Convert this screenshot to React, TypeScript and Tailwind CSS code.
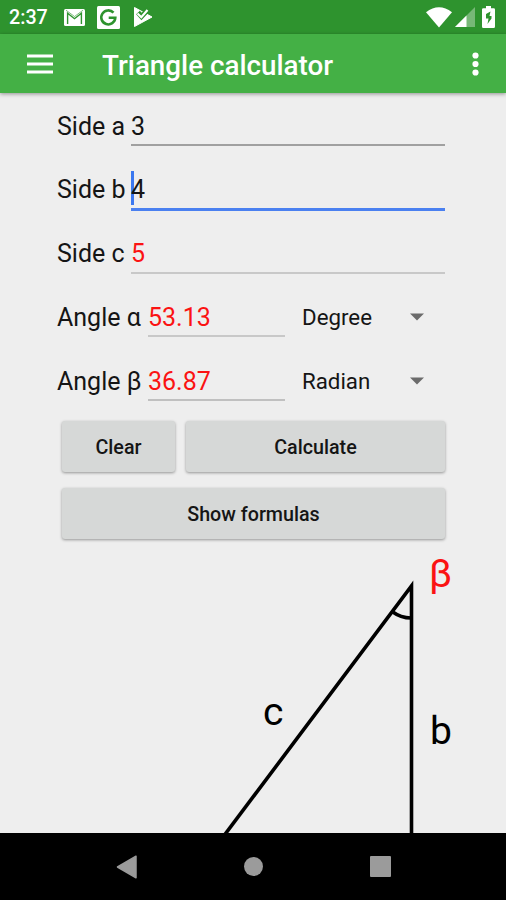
import React from "react";

type SideRowProps = { label: string; value: string; color: string; line: string; focused?: boolean };

function SideRow({ label, value, color, line, focused }: SideRowProps) {
  return (
    <div className="flex h-[63.75px] items-start pl-[57px] pr-[61px]">
      <label className="w-[74px] whitespace-pre pt-[17.5px] text-[25px] leading-8">{label}</label>
      <div className={`relative flex-1 pt-[17.5px] text-[25px] leading-8 ${line} ${color}`}>
        {focused && <span className="absolute left-0 top-[14px] h-[34px] w-[3px] bg-[#3b78f0]" />}
        <span className="relative">{value}</span>
      </div>
    </div>
  );
}

function AngleRow({ label, value, unit, line }: { label: string; value: string; unit: string; line: string }) {
  return (
    <div className="flex h-[63.75px] items-start pl-[57px] pr-[61px]">
      <label className="w-[91px] whitespace-pre pt-[18px] text-[25px] leading-8">{label}</label>
      <div className={`h-[53px] w-[137px] pt-[18px] text-[25px] leading-8 text-[#fb1313] ${line}`}>{value}</div>
      <div className="ml-[17px] flex flex-1 items-center pt-[17px] text-[22.3px] leading-8">
        <span className="w-[108px]">{unit}</span>
        <svg width="14" height="8" viewBox="0 0 14 8">
          <path d="M0 .5h14L7 7.5z" fill="#6b6b6b" />
        </svg>
      </div>
    </div>
  );
}

function Button({ children, className }: { children: React.ReactNode; className: string }) {
  return (
    <button
      className={`h-[51px] rounded-[3px] bg-[#d6d8d7] pt-[3px] text-[19.7px] font-medium shadow-[0_1px_3px_rgba(0,0,0,0.38)] ${className}`}
    >
      {children}
    </button>
  );
}

export default function App() {
  return (
    <div className="flex h-[900px] w-[506px] flex-col overflow-hidden bg-[#eeeeee] font-[Roboto,sans-serif] text-[#151515]">
      <div className="flex h-[34px] shrink-0 items-center bg-[#2e932e] pl-[9px] pr-[11px] text-white">
        <span className="w-[55px] pt-[2px] text-[19.7px] font-medium leading-6">2:37</span>
        <svg width="21" height="17" viewBox="0 0 21 17">
          <rect width="21" height="17" rx="1.5" fill="white" />
          <path d="M3.6 15V4.2l6.9 5.5 6.9-5.5V15" fill="none" stroke="#2e932e" strokeWidth="1.4" />
          <path d="M2 1.2l8.5 6.3L19 1.2" fill="none" stroke="#2e932e" strokeWidth="0.6" />
        </svg>
        <svg className="ml-3" width="23" height="23" viewBox="0 0 23 23">
          <rect width="23" height="23" rx="1.5" fill="white" />
          <path d="M16.5 6.7A7 7 0 1 0 18.3 11.8H11.7" fill="none" stroke="#2e932e" strokeWidth="2.6" />
        </svg>
        <svg className="ml-[13px]" width="20" height="20" viewBox="0 0 20 20">
          <path d="M1.5 .5L19 10 1.5 19.5z" fill="white" stroke="white" strokeLinejoin="round" />
          <path d="M5 5.500L8.500 9.500L16 1.500" fill="none" stroke="#2e932e" strokeWidth="5" />
          <path d="M4.500 6.500L8.300 10.200L14.500 3" fill="none" stroke="white" strokeWidth="2.200" />
        </svg>
        <svg className="ml-auto" width="26" height="21" viewBox="0 0 26 21">
          <path d="M0 5.2Q13-4.5 26 5.2L13 20.5z" fill="white" />
        </svg>
        <svg className="ml-[3px]" width="20" height="20" viewBox="0 0 20 20">
          <path d="M20 0v20H0z" fill="white" opacity=".35" />
          <path d="M11.5 8.5V20H0z" fill="white" />
        </svg>
        <svg className="ml-[7px]" width="13" height="22" viewBox="0 0 13 22">
          <path d="M4 0h5v2.200h2.700Q13 2.200 13 3.500v17q0 1.500-1.300 1.500H1.300Q0 22 0 20.500v-17Q0 2.200 1.300 2.200H4z" fill="white" />
          <path d="M8.500 5.500L4 8v4.500h2.500L5.500 18L9.500 12.500V10H7.500z" fill="#2e932e" />
        </svg>
      </div>

      <header className="z-10 flex h-[59px] shrink-0 items-center bg-[#44b045] pl-[27px] pr-[27px] text-white shadow-[0_1px_4px_rgba(0,0,0,0.4)]">
        <svg width="26" height="20" viewBox="0 0 26 20">
          <path d="M0 2h26M0 10h26M0 18h26" stroke="white" strokeWidth="3" />
        </svg>
        <h1 className="ml-[49px] pt-1 text-[27.8px] font-medium leading-8">Triangle calculator</h1>
        <svg className="ml-auto" width="7" height="24" viewBox="0 0 7 24">
          <circle cx="3.5" cy="3.5" r="3.1" fill="white" />
          <circle cx="3.5" cy="12" r="3.1" fill="white" />
          <circle cx="3.5" cy="20.5" r="3.1" fill="white" />
        </svg>
      </header>

      <main className="flex min-h-0 flex-1 flex-col">
        <SideRow label="Side a " value="3" color="" line="h-[53px] border-b-2 border-[#a0a0a0]" />
        <SideRow label="Side b " value="4" color="" line="h-[54px] border-b-3 border-[#4a80f0]" focused />
        <SideRow label="Side c " value="5" color="text-[#fb1313]" line="h-[53px] border-b-2 border-[#c8c8c8]" />
        <AngleRow label="Angle α " value="53.13" unit="Degree" line="border-b-2 border-[#c8c8c8]" />
        <AngleRow label="Angle β " value="36.87" unit="Radian" line="border-b-2 border-[#c0c0c0]" />
        <div className="mt-[9px] flex flex-wrap gap-x-[11px] gap-y-4 pl-[62px] pr-[61px]">
          <Button className="w-[113px]">Clear</Button>
          <Button className="flex-1">Calculate</Button>
          <Button className="w-full">Show formulas</Button>
        </div>
        <svg className="mt-[11px] shrink-0" width="506" height="283" viewBox="0 550 506 283">
          <path d="M220 841L411.5 586V840" fill="none" stroke="black" strokeWidth="3.6" />
          <path d="M392 611.500Q401 618 411 618" fill="none" stroke="black" strokeWidth="3.5" />
          <text x="429" y="587" fontSize="39" fill="#fb1313">β</text>
          <text x="430" y="744" fontSize="39" fill="black">b</text>
          <text x="263" y="724.500" fontSize="39" fill="black">c</text>
        </svg>
      </main>

      <nav className="z-10 flex h-[67px] shrink-0 items-center bg-black pl-[116px]">
        <svg width="22" height="24" viewBox="0 0 22 24">
          <path d="M1.500 12L20 1.200V22.800z" fill="#9b9b9b" stroke="#9b9b9b" strokeWidth="1.500" strokeLinejoin="round" />
        </svg>
        <span className="ml-[106px] h-[19px] w-[19px] rounded-full bg-[#9b9b9b]" />
        <span className="ml-[107px] h-[21px] w-[21px] rounded-[1px] bg-[#9b9b9b]" />
      </nav>
    </div>
  );
}
